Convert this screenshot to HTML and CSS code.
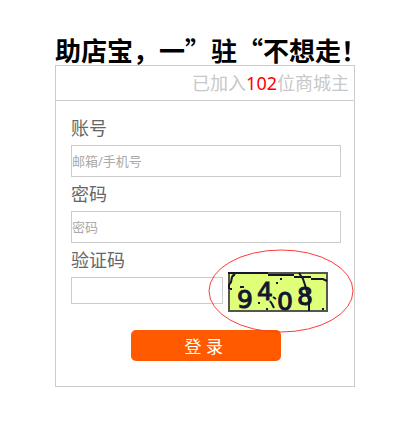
FILE: index.html
```html
<!DOCTYPE html>
<html lang="zh-CN">
<head>
  <meta charset="UTF-8">
  <meta name="viewport" content="width=device-width, initial-scale=1.0">
  <title>登录</title>
  <link rel="stylesheet" href="styles.css">
</head>
<body>
  <div class="container">
    <h1 class="slogan">助店宝，一”驻“不想走！</h1>
    <div class="login-box">
      <div class="count">已加入<span class="num">102</span>位商城主</div>
      <form class="login-form">
        <label for="account">账号</label>
        <input type="text" id="account" class="text" placeholder="邮箱/手机号">
        <label for="password">密码</label>
        <input type="password" id="password" class="text" placeholder="密码">
        <label for="code">验证码</label>
        <div class="code-row">
          <input type="text" id="code" class="text code">
          <div class="captcha">
            <svg class="captcha-img" viewBox="0 0 100 40" width="100" height="40">
              <rect x="1" y="1" width="98" height="38" fill="#dfff78" stroke="#55574f" stroke-width="2"/>
              <g class="digits">
                <text x="9" y="36">9</text>
                <text x="29" y="28">4</text>
                <text x="49" y="38">0</text>
                <text x="69" y="33">8</text>
              </g>
              <!-- noise lines -->
              <g fill="none" stroke="#15152f" stroke-width="2">
                <path d="M0 1H40M40 3H66M66 5H83M83 7H95L99 9"/>
                <path d="M7 2L4 5L3 10L1 13V17M4 4L6 3"/>
                <path d="M71 1L75 7L77 13L79 20L81 28V39"/>
                <path d="M12 15H16M42 29L44 32L46 36M45 25L48 27"/>
              </g>
              <g fill="#15152f">
                <rect x="52" y="6" width="2" height="2"/>
                <rect x="48" y="10" width="2" height="2"/>
                <rect x="30" y="30" width="2" height="2"/>
                <rect x="38" y="36" width="2" height="2"/>
                <rect x="94" y="36" width="2" height="2"/>
                <rect x="2" y="16" width="2" height="2"/>
              </g>
            </svg>
            <svg class="circle" viewBox="0 0 146 84" width="146" height="84">
              <ellipse cx="73" cy="42" rx="72" ry="41" fill="none" stroke="#ff3b3b"/>
            </svg>
          </div>
        </div>
        <button type="submit">登 录&nbsp;</button>
      </form>
    </div>
  </div>
</body>
</html>
```

FILE: styles.css
```css
body {
  font-family: "Noto Sans", "Noto Sans CJK SC", sans-serif;
  background-color: #fff;
  margin: 0;
  padding: 35px 50px 0 55px;
}

.container {
  max-width: 300px;
}

.slogan {
  margin: 0;
  height: 30px;
  line-height: 30px;
  font-family: "Noto Sans CJK SC", sans-serif;
  font-size: 26px;
  font-weight: bold;
  color: #000;
  white-space: nowrap;
}

.login-box {
  border: 1px solid #ccc;
}

.count {
  padding-right: 5px;
  line-height: 34px;
  border-bottom: 1px solid #ccc;
  font-size: 18px;
  text-align: right;
  color: #c8c8c8;
}

.num {
  color: #f00;
}

.login-form {
  display: flex;
  flex-direction: column;
  padding: 10px 13px 25px 15px;
}

label {
  line-height: 34px;
  font-size: 18px;
  color: #666;
}

.text {
  box-sizing: border-box;
  width: 100%;
  height: 32px;
  padding: 0;
  border: 1px solid #ccc;
  font-family: inherit;
  font-size: 13px;
  color: #666;
}

.text::placeholder {
  color: #aaa;
}

.code-row {
  display: flex;
  align-items: center;
  height: 30px;
  gap: 5px;
}

.code {
  width: 152px;
  height: 27px;
  align-self: flex-start;
}

.captcha {
  position: relative;
}

.captcha-img {
  display: block;
  overflow: visible;
}

.digits {
  font-family: "DejaVu Sans", sans-serif;
  font-size: 25px;
  fill: #15152f;
  stroke: #15152f;
  stroke-width: 1px;
}

/* red ring around the captcha */
.circle {
  position: absolute;
  left: -20px;
  top: -23px;
  pointer-events: none;
}

button {
  align-self: center;
  width: 150px;
  height: 31px;
  margin-top: 23px;
  padding: 0;
  border: none;
  border-radius: 5px;
  background-color: #ff5a00;
  color: #fff;
  font-family: inherit;
  font-size: 17px;
  cursor: pointer;
}
```
